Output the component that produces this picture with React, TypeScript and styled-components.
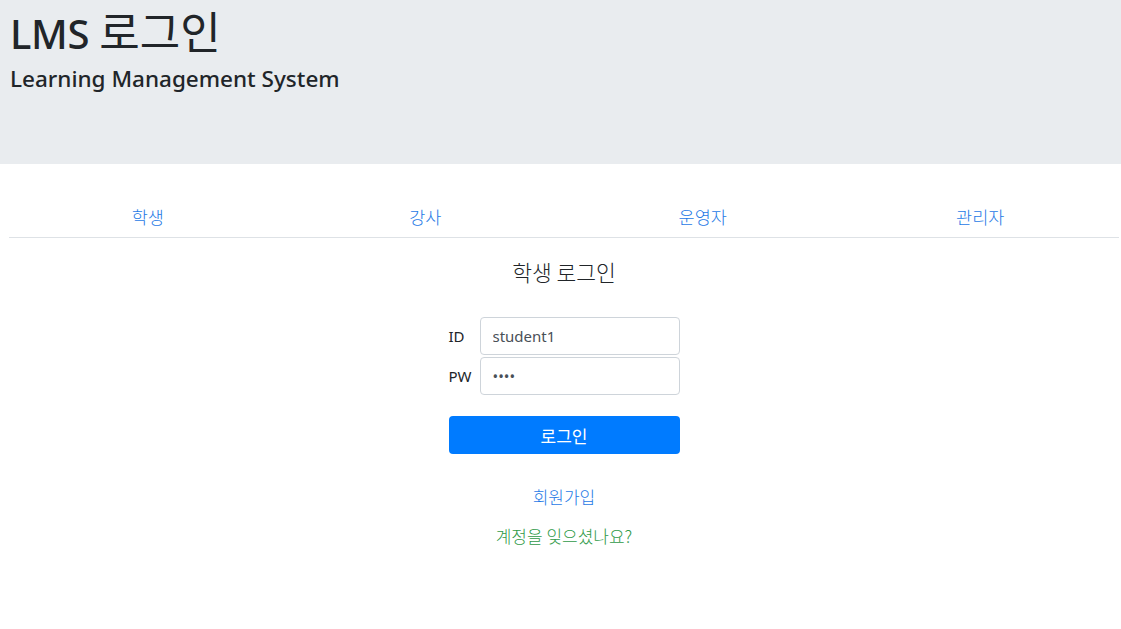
import React, { useState } from "react";
import styled, { createGlobalStyle } from "styled-components";

const Global = createGlobalStyle`
  html, body { margin: 0; padding: 0; background: #fff; }
  body {
    font-family: "Noto Sans", "Noto Sans CJK KR", sans-serif;
    color: #212529;
    font-size: 16px;
    line-height: 1.5;
  }
  * { box-sizing: border-box; }
`;

const Jumbotron = styled.header`
  background: #e9ecef;
  height: 164px;
  padding: 8px 10px 0;
`;

const Title = styled.h1`
  margin: 0 0 6px;
  font-size: 40px;
  font-weight: 500;
  line-height: 48px;
  letter-spacing: -0.3px;
`;

const TitleKr = styled.span`
  font-family: "Noto Sans CJK KR", sans-serif;
  font-size: 44px;
  font-weight: 400;
  line-height: 44px;
  letter-spacing: 0;
`;

const Subtitle = styled.h4`
  margin: 0;
  font-size: 22.5px;
  font-weight: 500;
  line-height: 29px;
`;

const Container = styled.main`
  padding: 33px 2px 0 9px;
`;

const Tabs = styled.nav`
  display: grid;
  grid-template-columns: repeat(4, 1fr);
  border-bottom: 1px solid #dee2e6;
`;

const Tab = styled.a`
  display: block;
  text-align: center;
  padding: 8px 16px;
  line-height: 24px;
  color: #1f7ae6;
  font-family: "Noto Sans CJK KR", sans-serif;
  font-size: 17.5px;
  font-weight: 300;
  text-decoration: none;
  cursor: pointer;
`;

const Panel = styled.section`
  display: flex;
  flex-direction: column;
  align-items: center;
  padding-top: 22px;
`;

const PanelTitle = styled.h5`
  margin: 0 0 33px;
  font-family: "Noto Sans CJK KR", sans-serif;
  font-size: 21.5px;
  font-weight: 300;
  line-height: 24px;
`;

const Form = styled.form`
  width: 231px;
  display: flex;
  flex-direction: column;
`;

const Row = styled.label`
  display: grid;
  grid-template-columns: 31px 200px;
  align-items: center;
  margin-bottom: 2px;
  font-size: 15px;
`;

const Input = styled.input`
  height: 38px;
  width: 200px;
  padding: 6px 12px;
  border: 1px solid #ced4da;
  border-radius: 4px;
  font-family: inherit;
  font-size: 15px;
  color: #495057;
  background: #fff;
  outline: none;
`;

const Button = styled.button`
  margin-top: 19px;
  height: 38px;
  width: 231px;
  border: none;
  border-radius: 4px;
  background: #007bff;
  color: #fff;
  font-family: "Noto Sans CJK KR", sans-serif;
  font-size: 17px;
  font-weight: 400;
  cursor: pointer;
`;

const Links = styled.div`
  display: flex;
  flex-direction: column;
  align-items: center;
  gap: 15px;
  margin-top: 31px;
`;

const LinkText = styled.a<{ $tone: "blue" | "green" }>`
  color: ${(p) => (p.$tone === "blue" ? "#1f7ae6" : "#2f9a48")};
  font-family: "Noto Sans CJK KR", sans-serif;
  font-size: 17px;
  font-weight: 300;
  line-height: 24px;
  text-decoration: none;
  cursor: pointer;
`;

export default function App() {
  const [id, setId] = useState("student1");
  const [pw, setPw] = useState("1234");
  return (
    <>
      <Global />
      <Jumbotron>
        <Title>
          LMS <TitleKr>로그인</TitleKr>
        </Title>
        <Subtitle>Learning Management System</Subtitle>
      </Jumbotron>
      <Container>
        <Tabs>
          <Tab>학생</Tab>
          <Tab>강사</Tab>
          <Tab>운영자</Tab>
          <Tab>관리자</Tab>
        </Tabs>
        <Panel>
          <PanelTitle>학생 로그인</PanelTitle>
          <Form onSubmit={(e) => e.preventDefault()}>
            <Row>
              <span>ID</span>
              <Input value={id} onChange={(e) => setId(e.target.value)} />
            </Row>
            <Row>
              <span>PW</span>
              <Input type="password" value={pw} onChange={(e) => setPw(e.target.value)} />
            </Row>
            <Button type="submit">로그인</Button>
          </Form>
          <Links>
            <LinkText $tone="blue">회원가입</LinkText>
            <LinkText $tone="green">계정을 잊으셨나요?</LinkText>
          </Links>
        </Panel>
      </Container>
    </>
  );
}
